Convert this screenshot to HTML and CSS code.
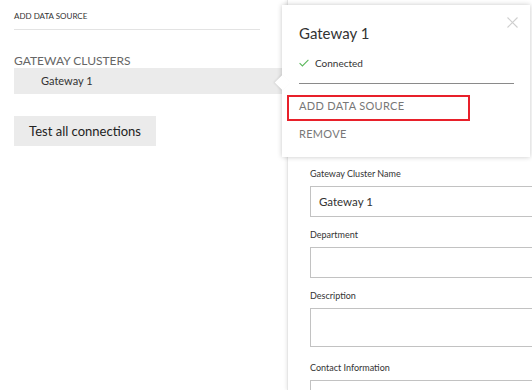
FILE: index.html
```html
<!DOCTYPE html>
<html>
<head>
<meta charset="utf-8">
<link rel="stylesheet" href="styles.css">
</head>
<body>
<div class="app">
  <div class="left">
    <div class="crumb">ADD DATA SOURCE</div>
    <div class="divider"></div>
    <div class="section-title">GATEWAY CLUSTERS</div>
    <div class="cluster-row">Gateway 1</div>
    <button class="test-btn">Test all connections</button>
  </div>
  <div class="right">
    <div class="right-top"><span class="edge-mark"></span></div>
    <form class="form">
      <label class="field-label">Gateway Cluster Name</label>
      <div class="input">Gateway 1</div>
      <label class="field-label">Department</label>
      <div class="input"></div>
      <label class="field-label">Description</label>
      <div class="input tall"></div>
      <label class="field-label">Contact Information</label>
      <div class="input"></div>
    </form>
  </div>
  <div class="popup">
    <div class="arrow"></div>
    <div class="close">
      <svg width="11" height="11" viewBox="0 0 11 11"><path d="M0.5 0.5L10.5 10.5M10.5 0.5L0.5 10.5" stroke="#cfcfcf" stroke-width="1.1" fill="none"/></svg>
    </div>
    <div class="popup-title">Gateway 1</div>
    <div class="status">
      <svg width="10" height="8" viewBox="0 0 10 8"><path d="M0.6 4.2L3.4 7L9.4 0.8" stroke="#5cb85c" stroke-width="1.1" fill="none"/></svg>
      <span>Connected</span>
    </div>
    <div class="popup-divider"></div>
    <div class="action highlighted">ADD DATA SOURCE</div>
    <div class="action">REMOVE</div>
  </div>
</div>
</body>
</html>
```
FILE: styles.css
```css
* { box-sizing: border-box; }
html, body { margin: 0; padding: 0; background: #fff; }
body { font-family: "Lato", "Open Sans", sans-serif; color: #333; }
.app { position: relative; display: flex; width: 532px; height: 390px; overflow: hidden; }

.left { width: 287px; flex: none; padding: 11px 0 0 14px; display: flex; flex-direction: column; align-items: flex-start; }
.crumb { font-size: 8px; line-height: 11px; color: #333; }
.divider { align-self: stretch; margin: 7px 27px 0 0; height: 1px; background: #e3e3e3; }
.section-title { margin-top: 24px; font-size: 12px; line-height: 14px; color: #666; }
.cluster-row { align-self: stretch; height: 26px; background: #ebebeb; padding-left: 27px; font-size: 11px; line-height: 26px; color: #333; }
.test-btn { margin-top: 22px; width: 142px; height: 30px; border: none; background: #ebebeb; font-family: inherit; font-size: 13px; color: #222; padding: 0; }

.right { flex: 1; border-left: 1px solid #e6e6e6; box-shadow: -1px 0 3px rgba(0,0,0,0.08); padding-left: 22px; }
.right-top { height: 168px; position: relative; }
.edge-mark { position: absolute; right: 0; top: 38px; width: 2px; height: 12px; background: #9aa8b8; }
.form { display: flex; flex-direction: column; }
.field-label { font-size: 9px; line-height: 12px; color: #333; margin-bottom: 6px; }
.input { width: 260px; height: 31px; border: 1px solid #c2c2c2; margin-bottom: 12px; font-size: 11.5px; line-height: 29px; padding-left: 8px; color: #333; }
.input.tall { height: 39px; margin-bottom: 15px; }

.popup { position: absolute; left: 282px; top: 5px; width: 248px; height: 152px; background: #fff; box-shadow: 0 0 5px rgba(0,0,0,0.22); padding: 0 0 0 17px; }
.arrow { position: absolute; left: -5px; top: 72px; width: 11px; height: 11px; background: #fff; transform: rotate(45deg); box-shadow: -1px 1px 2px rgba(0,0,0,0.08); }
.close { position: absolute; right: 12px; top: 12px; width: 11px; height: 11px; display: flex; }
.popup-title { position: relative; margin-top: 18px; font-size: 15px; line-height: 20px; color: #333; }
.status { margin-top: 14px; display: flex; align-items: center; gap: 6px; font-size: 10px; line-height: 12px; color: #333; }
.popup-divider { margin: 14px 16px 0 0; height: 1px; background: #8a8a8a; }
.action { font-size: 11px; line-height: 14px; color: #777; letter-spacing: 0.3px; }
.action.highlighted { position: relative; margin-top: 15px; }
.action.highlighted::after { content: ""; position: absolute; left: -12px; top: -4px; width: 179px; height: 22px; border: 2px solid #e8202a; }
.action + .action { margin-top: 14px; }
```
